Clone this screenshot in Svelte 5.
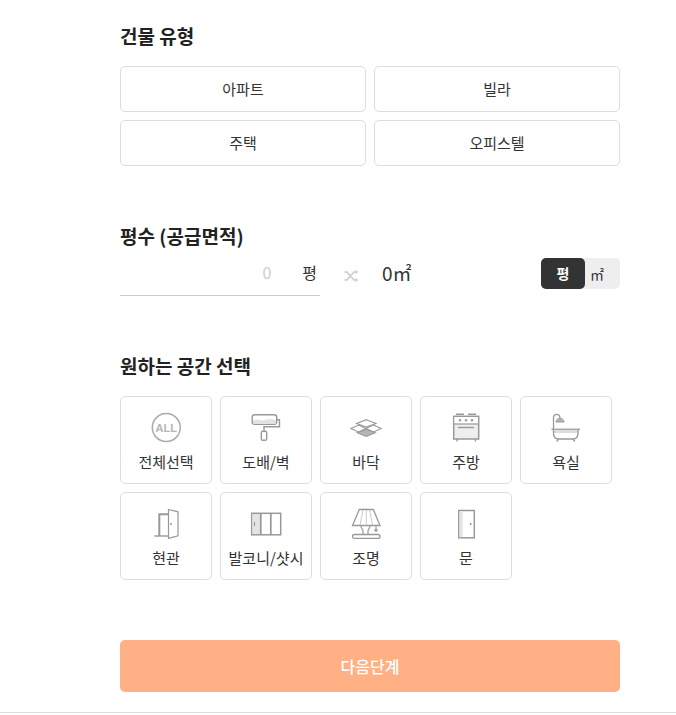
<script>
  const buildingTypes = ['아파트', '빌라', '주택', '오피스텔'];
  const spaces = [
    { id: 'all', label: '전체선택' },
    { id: 'wall', label: '도배/벽' },
    { id: 'floor', label: '바닥' },
    { id: 'kitchen', label: '주방' },
    { id: 'bath', label: '욕실' },
    { id: 'entry', label: '현관' },
    { id: 'balcony', label: '발코니/샷시' },
    { id: 'light', label: '조명' },
    { id: 'door', label: '문' }
  ];
</script>

<main class="page">
  <div class="form">
    <section class="type">
      <h2>건물 유형</h2>
      <div class="type-grid">
        {#each buildingTypes as t}
          <button class="type-btn">{t}</button>
        {/each}
      </div>
    </section>

    <section class="area">
      <h2>평수 (공급면적)</h2>
      <div class="area-row">
        <div class="area-input">
          <span class="zero">0</span>
          <span class="unit">평</span>
        </div>
        <svg class="swap" viewBox="0 0 16 16" aria-hidden="true">
          <path d="M1.500 4h2.500l7 8h2.500M1.500 12h2.500l7-8h2.500" fill="none" stroke="#ccc" stroke-width="1.600" />
          <path d="M12.500 1.800l2.600 2.200-2.600 2.200zM12.500 9.800l2.600 2.200-2.600 2.200z" fill="#ccc" />
        </svg>
        <span class="converted">0㎡</span>
        <div class="toggle">
          <span class="toggle-on">평</span>
          <span class="toggle-off">㎡</span>
        </div>
      </div>
    </section>

    <section class="spaces">
      <h2>원하는 공간 선택</h2>
      <div class="space-grid">
        {#each spaces as s}
          <button class="tile">
            <svg class="icon" viewBox="0 0 32 32" aria-hidden="true">
              {#if s.id === 'all'}
                <circle cx="16.300" cy="15.500" r="14" fill="none" stroke="#aaa" stroke-width="1.500" />
                <text x="16.300" y="19.500" text-anchor="middle" class="all">ALL</text>
              {:else if s.id === 'wall'}
                <rect x="2.200" y="2.800" width="24.500" height="9.500" rx="2.500" fill="#fff" stroke="#999" stroke-width="1.400" />
                <path d="M3 8.500c5-2.500 8 1 12-.5s7-1 11 0v3a1 1 0 0 1-1 1H4a1 1 0 0 1-1-1z" fill="#e2e2e2" />
                <path d="M26.700 7.700h2.800v7H14v4.500" fill="none" stroke="#999" stroke-width="1.400" />
                <rect x="11.300" y="19.300" width="5.400" height="9" rx="1.600" fill="#fff" stroke="#999" stroke-width="1.400" />
              {:else if s.id === 'floor'}
                <path d="M1 16.500l7.500-3.500 7.500 3.500-7.500 3.500zM16 16.500l7.500-3.500 7.500 3.500-7.500 3.500z" fill="#fff" stroke="#999" stroke-width="1.100" />
                <path d="M16.300 7.700l9.700 3.700-9.700 3.700-9.700-3.700z" fill="#fff" stroke="#999" stroke-width="1.100" />
                <path d="M16.300 17.300l9 3.500-9 3.700-9-3.700z" fill="#b5b5b5" stroke="#999" stroke-width="1.100" />
              {:else if s.id === 'kitchen'}
                <path d="M6 2.300h8M18 2.300h8" stroke="#999" stroke-width="1.400" />
                <rect x="3.700" y="4.300" width="25" height="22.700" fill="#eee" stroke="#999" stroke-width="1.500" />
                <path d="M4.500 5h23.500v6.700H4.500z" fill="#fff" />
                <path d="M3.700 12h25" stroke="#999" stroke-width="1.200" />
                <circle cx="10" cy="8.200" r="1.200" fill="#999" />
                <circle cx="16" cy="8.200" r="1.200" fill="#999" />
                <circle cx="22" cy="8.200" r="1.200" fill="#999" />
                <path d="M8 15.500h16" stroke="#999" stroke-width="1.400" />
                <path d="M7 27v2.500M25.500 27v2.500" stroke="#999" stroke-width="1.400" />
              {:else if s.id === 'bath'}
                <path d="M3.500 17V5.500a3.200 3.200 0 0 1 6.400 0v.7" fill="none" stroke="#999" stroke-width="1.300" />
                <path d="M6 10c0-2 1.700-3.800 4-3.800s4 1.800 4 3.800z" fill="#b5b5b5" stroke="#999" stroke-width="1" />
                <path d="M1.500 17.300h28.500" stroke="#999" stroke-width="1.400" />
                <path d="M3 17.800h25.500v3.200H3z" fill="#ddd" />
                <path d="M3.500 18v3c0 3.700 2 6 5 6h14.500c3 0 5-2.300 5-6v-3" fill="none" stroke="#999" stroke-width="1.300" />
                <path d="M8.500 27l-1.800 2.500M23 27l1.800 2.500" stroke="#999" stroke-width="1.300" />
              {:else if s.id === 'entry'}
                <path d="M4.300 28h14" stroke="#999" stroke-width="1.400" />
                <path d="M9.300 28V6.300h9" fill="none" stroke="#999" stroke-width="2" />
                <path d="M18.500 1.500l9.500 2.300v24l-9.500 2.600z" fill="#fff" stroke="#999" stroke-width="1.200" />
                <circle cx="21" cy="16" r=".9" fill="#888" />
              {:else if s.id === 'balcony'}
                <rect x="1.700" y="5.300" width="29" height="21.500" fill="#fff" stroke="#999" stroke-width="1.500" />
                <rect x="2.500" y="6" width="8" height="20" fill="#e4e4e4" />
                <path d="M10.800 5v22M20.800 5v22" stroke="#999" stroke-width="1.700" />
                <path d="M4.500 14v4" stroke="#999" stroke-width="1.200" />
              {:else if s.id === 'light'}
                <path d="M9.300 1.500h14l6.700 16H2.500z" fill="#fff" stroke="#999" stroke-width="1.300" />
                <path d="M13 2l-3 15M19.500 2l3 15M16.300 2v15" stroke="#ccc" stroke-width="1" />
                <path d="M11 17.500c0 3.500 2 3.500 2 5.500v3.500M20 17.500c0 3.500-2 3.500-2 5.500v3.500" fill="none" stroke="#999" stroke-width="1.200" />
                <path d="M26 17.500v3.500" stroke="#999" stroke-width="1" />
                <circle cx="26" cy="22.200" r="1.300" fill="#aaa" stroke="#999" stroke-width=".8" />
                <rect x="2.500" y="26.500" width="27.500" height="3.800" rx="1.900" fill="#fff" stroke="#999" stroke-width="1.300" />
              {:else}
                <rect x="8.800" y="2.500" width="15.500" height="27.300" fill="#fff" stroke="#999" stroke-width="1.500" />
                <rect x="9.500" y="3.200" width="3.200" height="26" fill="#e4e4e4" />
                <circle cx="20.700" cy="16" r=".9" fill="#888" />
              {/if}
            </svg>
            <span class="tile-label">{s.label}</span>
          </button>
        {/each}
      </div>
    </section>

    <button class="next">다음단계</button>
  </div>
  <hr class="rule" />
</main>

<style>
  :global(body) {
    background: #fff;
    font-family: "Noto Sans CJK KR", "Noto Sans", sans-serif;
  }

  .page {
    padding-top: 24px;
  }

  .form {
    width: 500px;
    margin-left: 120px;
  }

  h2 {
    margin: 0;
    font-size: 19px;
    line-height: 22px;
    padding: 1px 0;
    font-weight: 700;
    color: #222;
  }

  button {
    font-family: inherit;
    background: #fff;
    cursor: pointer;
    padding: 0;
  }

  .type-grid {
    display: grid;
    grid-template-columns: 246px 246px;
    gap: 8px;
    margin-top: 18px;
  }

  .type-btn {
    height: 46px;
    border: 1px solid #ddd;
    border-radius: 5px;
    font-size: 15px;
    color: #333;
    padding-bottom: 2px;
  }

  .area {
    margin-top: 58px;
  }

  .area-row {
    display: flex;
    align-items: flex-start;
    margin-top: 10px;
    height: 38px;
  }

  .area-input {
    width: 200px;
    height: 38px;
    box-sizing: border-box;
    border-bottom: 1px solid #ccc;
    display: flex;
    justify-content: flex-end;
    align-items: flex-start;
    font-size: 16px;
    line-height: 29px;
    padding-right: 3px;
  }

  .zero {
    color: #ccc;
  }

  .unit {
    margin-left: 31px;
    color: #333;
  }

  .swap {
    width: 16px;
    height: 16px;
    margin-left: 23px;
    margin-top: 10px;
  }

  .converted {
    margin-left: 23px;
    font-size: 19px;
    line-height: 30px;
    color: #333;
  }

  .toggle {
    margin-left: auto;
    width: 79px;
    height: 31px;
    display: flex;
    background: #eee;
    border-radius: 5px;
    font-size: 14px;
  }

  .toggle-on {
    width: 44px;
    background: #333;
    color: #fff;
    border-radius: 5px;
    font-weight: 700;
    display: flex;
    align-items: center;
    justify-content: center;
    padding-bottom: 1px;
    box-sizing: border-box;
  }

  .toggle-off {
    flex: 1;
    color: #333;
    display: flex;
    align-items: center;
    justify-content: center;
    padding-right: 11px;
  }

  .spaces {
    margin-top: 58px;
  }

  .space-grid {
    display: grid;
    grid-template-columns: repeat(5, 92px);
    gap: 8px;
    margin-top: 18px;
  }

  .tile {
    height: 88px;
    box-sizing: border-box;
    border: 1px solid #ddd;
    border-radius: 5px;
    display: flex;
    flex-direction: column;
    align-items: center;
    padding-top: 15px;
  }

  .icon {
    width: 32px;
    height: 32px;
    flex: none;
  }

  .all {
    font-size: 11px;
    font-weight: 700;
    fill: #b5b5b5;
    font-family: "Liberation Sans", sans-serif;
  }

  .tile-label {
    margin-top: 8px;
    font-size: 15px;
    line-height: 20px;
    color: #333;
    white-space: nowrap;
  }

  .next {
    display: block;
    width: 100%;
    height: 52px;
    margin-top: 60px;
    border: 0;
    border-radius: 5px;
    background: #ffb085;
    color: #fff;
    font-size: 16px;
    font-weight: 500;
  }

  .rule {
    margin: 20px 0 0;
    border: 0;
    border-top: 1px solid #ddd;
  }
</style>
